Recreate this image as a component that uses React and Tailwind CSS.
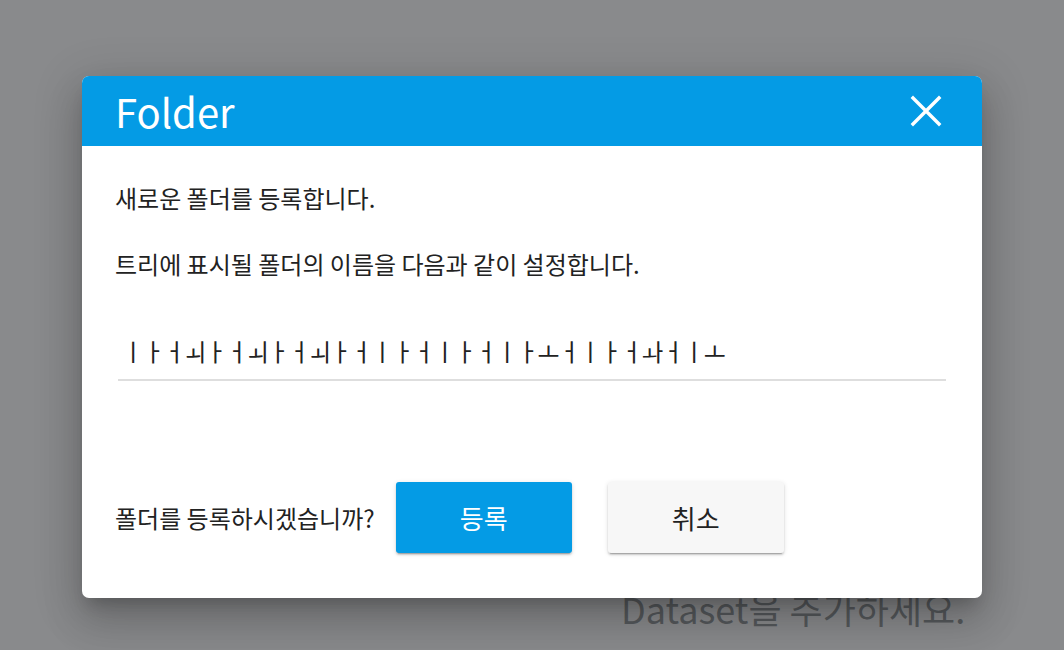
import React from "react";

const F = { fontFamily: '"Noto Sans CJK KR", "Noto Sans", sans-serif' };

export default function App() {
  const jamo = "ㅣㅏㅓㅚㅏㅓㅚㅏㅓㅚㅏㅓㅣㅏㅓㅣㅏㅓㅣㅏㅗㅓㅣㅏㅓㅘㅓㅣㅗ";
  return (
    <div className="relative h-[650px] w-[1064px] overflow-hidden bg-[#898a8c]" style={F}>
      <div className="pl-[621px] pt-[584px] text-[36px] leading-[48px] text-[#56595c]">Dataset을 추가하세요.</div>

      <div className="absolute left-[82px] top-[76px] w-[900px] h-[522px] overflow-hidden rounded-[7px] bg-white shadow-[0_11px_15px_-7px_rgba(0,0,0,0.2),0_24px_38px_3px_rgba(0,0,0,0.14),0_9px_46px_8px_rgba(0,0,0,0.12)] flex flex-col">
        <div className="h-[70px] bg-[#049be5] flex items-center justify-between pl-[33px] pr-[40px]">
          <div className="text-[40px] leading-none text-white">Folder</div>
          <svg width="32" height="32" viewBox="0 0 32 32" className="text-white">
            <path d="M3 3 L29 29 M29 3 L3 29" stroke="currentColor" strokeWidth="3.4" strokeLinecap="square" />
          </svg>
        </div>
        <div className="flex flex-col px-[33px] text-[#222] text-[24px]">
          <p className="mt-[37px] leading-[30px]">새로운 폴더를 등록합니다.</p>
          <p className="mt-[36px] leading-[30px]">트리에 표시될 폴더의 이름을 다음과 같이 설정합니다.</p>
          <div className="mx-[3px] mt-[57px] border-b-2 border-[#dedede] pb-[13px] pl-[4px] leading-[30px] tracking-[-1.3px] text-[#222]">{jamo}</div>
          <div className="mt-[101px] flex items-center">
            <span className="leading-[30px]">폴더를 등록하시겠습니까?</span>
            <button className="ml-[21px] h-[71px] w-[176px] rounded-[3px] bg-[#049be5] text-white text-[26px] shadow-[0_3px_1px_-2px_rgba(0,0,0,0.2),0_2px_2px_0_rgba(0,0,0,0.14),0_1px_5px_0_rgba(0,0,0,0.12)]">등록</button>
            <button className="ml-[36px] h-[71px] w-[176px] rounded-[3px] bg-[#f7f7f7] text-[#222] text-[26px] shadow-[0_3px_1px_-2px_rgba(0,0,0,0.2),0_2px_2px_0_rgba(0,0,0,0.14),0_1px_5px_0_rgba(0,0,0,0.12)]">취소</button>
          </div>
        </div>
      </div>
    </div>
  );
}
